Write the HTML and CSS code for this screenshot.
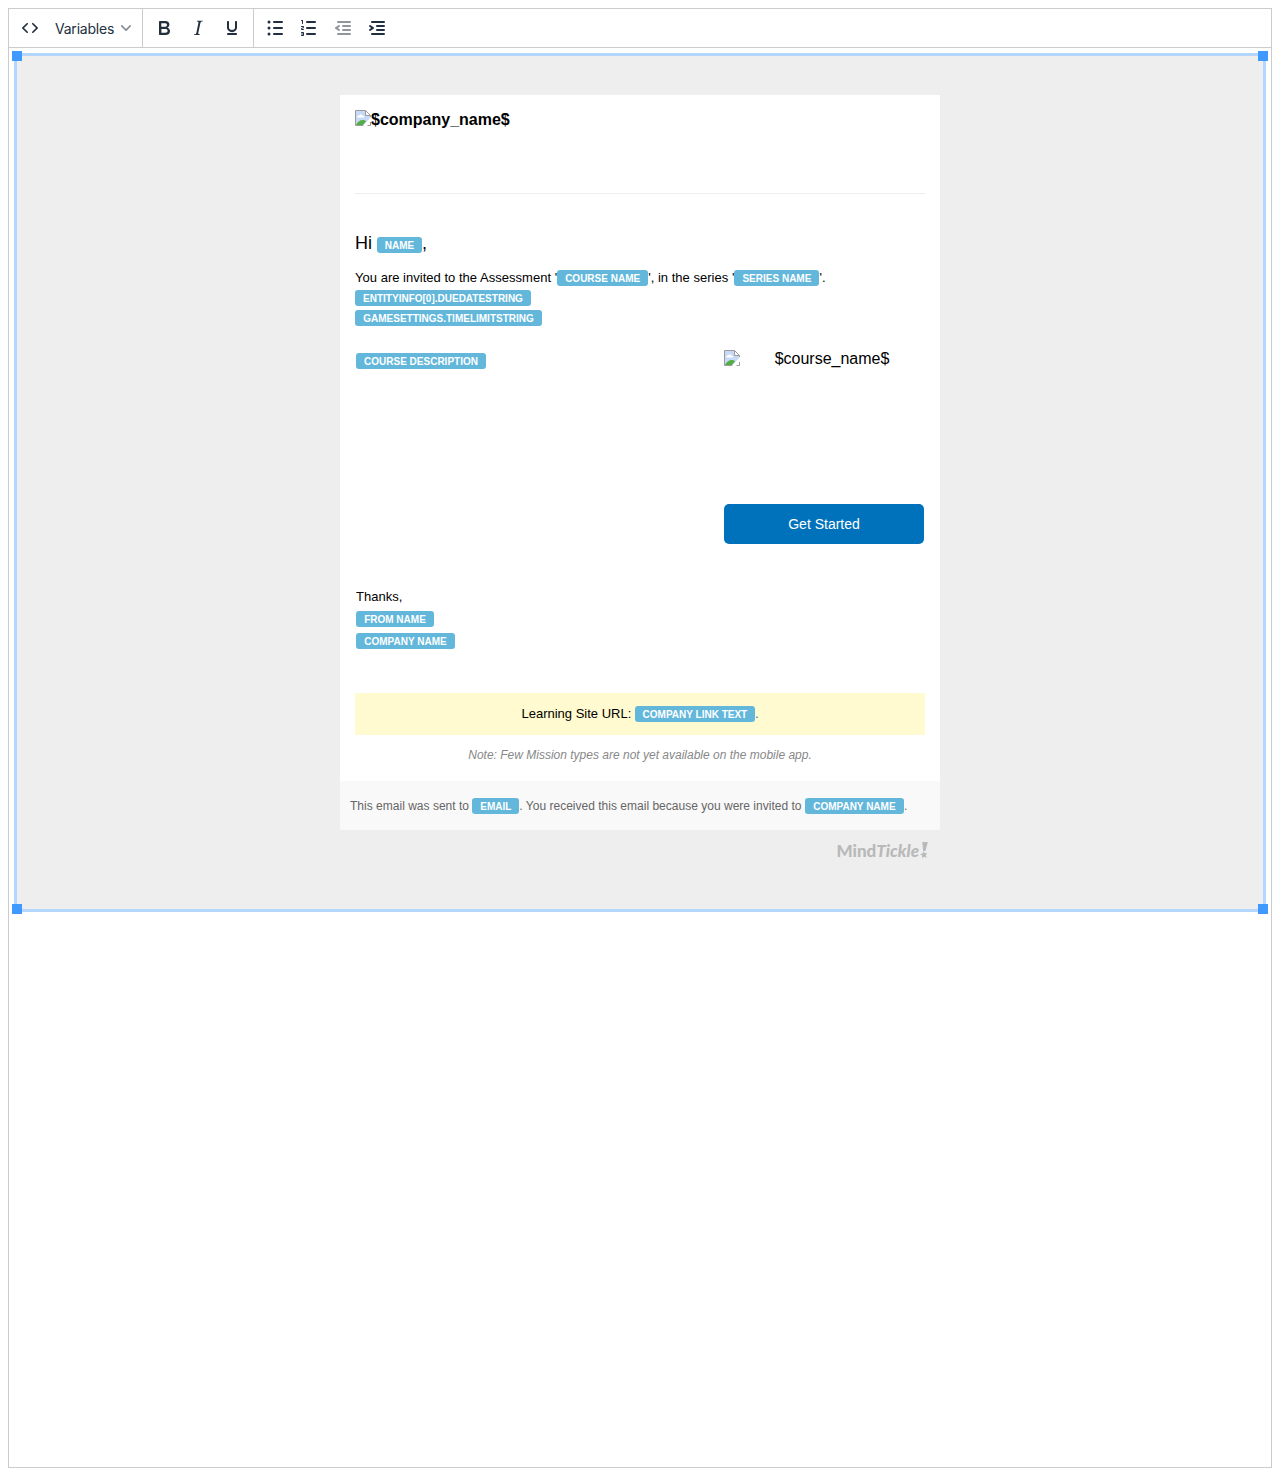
FILE: index.html
```html
<!DOCTYPE html>
<html lang="en">
<head>
<meta charset="utf-8">
<title>Email template editor</title>
<link rel="stylesheet" href="styles.css">
</head>
<body>
<svg class="defs" width="0" height="0">
  <symbol id="broken" viewBox="0 0 16 16">
    <path d="M.5.5h10l5 5v2L8 15.500H.5z" fill="#c6d9f6"/>
    <path d="M2 7.500c0-1.500 1-2 2-2 .5-1.500 3-1.500 3.500 0 1.500 0 2 1 1.500 2z" fill="#fff"/>
    <path d="M1 15c1-3 4-5 7-5 1.500 0 2.500.5 3 1.500L8 15z" fill="#57ad45"/>
    <path d="M10.500.5v5h5z" fill="#fff"/>
    <path d="M8.500 15.500H.5V.5h10l5 5V7M10.500.5v5h5M12.500 15.500h3V12" fill="none" stroke="#9b9b9b"/>
    <path d="M9 16l7-6.500" stroke="#fff" stroke-width="2"/>
  </symbol>
</svg>
<div class="editor">
  <div class="toolbar">
    <div class="group">
      <button class="tool"><svg width="24" height="24"><path d="M9.800 15.700c.3.3.3.8 0 1-.3.4-.9.4-1.200 0l-4.400-4.100a.8.8 0 010-1.200l4.400-4.200c.3-.3.9-.3 1.200 0 .3.3.3.8 0 1.100L6 12l3.800 3.700zM14.200 15.700c-.3.3-.3.8 0 1 .4.4.9.4 1.200 0l4.400-4.100c.3-.3.3-.9 0-1.200l-4.400-4.200a.8.8 0 00-1.200 0c-.3.3-.3.8 0 1.100L18 12l-3.800 3.700z"/></svg></button>
      <button class="tool select"><span>Variables</span><svg width="10" height="10"><path d="M8.700 2.200c.3-.3.8-.3 1 0 .4.4.4.9 0 1.200L5.700 7.800c-.3.3-.9.3-1.200 0L.2 3.400a.8.8 0 010-1.200c.3-.3.8-.3 1.100 0L5 6l3.700-3.800z"/></svg></button>
    </div>
    <div class="group">
      <button class="tool"><svg width="24" height="24"><path d="M7.800 19c-.3 0-.5 0-.6-.2l-.2-.5V5.700c0-.2 0-.4.2-.5l.6-.2h5c1.500 0 2.700.3 3.500 1 .7.6 1.100 1.400 1.100 2.500a3 3 0 01-.6 1.900c-.4.6-1 1-1.600 1.200.4.1.9.3 1.300.6s.8.7 1 1.200c.4.4.5 1 .5 1.600 0 1.300-.4 2.300-1.300 3-.8.7-2.100 1-3.800 1H7.800zm5-8.300c.6 0 1.200-.1 1.600-.5.4-.3.6-.7.6-1.300 0-1.100-.8-1.700-2.300-1.700H9.300v3.500h3.400zm.5 6c.7 0 1.300-.1 1.700-.4.4-.4.6-.9.6-1.500s-.2-1-.7-1.400c-.4-.3-1-.4-2-.4H9.400v3.800h4z" fill-rule="evenodd"/></svg></button>
      <button class="tool"><svg width="24" height="24"><path d="M16.700 4.700l-.1.9h-.3c-.6 0-1 0-1.400.3-.3.3-.4.6-.5 1.100l-2.100 9.800v.6c0 .5.4.8 1.400.8h.2l-.2.8H8l.2-.8h.2c1.100 0 1.800-.5 2-1.500l2-9.800.1-.5c0-.6-.4-.8-1.400-.8h-.3l.2-.9h5.800z"/></svg></button>
      <button class="tool"><svg width="24" height="24"><path d="M16 5c.6 0 1 .4 1 1v5.500a4 4 0 01-.4 1.800l-1 1.400a5.300 5.300 0 01-5.500 1 5 5 0 01-1.600-1c-.5-.4-.8-.9-1.100-1.400a4 4 0 01-.4-1.800V6c0-.6.4-1 1-1s1 .4 1 1v5.500c0 .3 0 .6.2 1l.6.7a3.300 3.300 0 002.200.8 3.400 3.400 0 002.200-.8c.3-.2.4-.5.6-.8l.2-.9V6c0-.6.4-1 1-1zM8 17h8c.6 0 1 .4 1 1s-.4 1-1 1H8a1 1 0 010-2z"/></svg></button>
    </div>
    <div class="group last">
      <button class="tool"><svg width="24" height="24"><path d="M11 5h8a1 1 0 010 2h-8a1 1 0 010-2zm0 6h8a1 1 0 010 2h-8a1 1 0 010-2zm0 6h8a1 1 0 010 2h-8a1 1 0 010-2z"/><circle cx="6" cy="6" r="1.500"/><circle cx="6" cy="12" r="1.500"/><circle cx="6" cy="18" r="1.500"/></svg></button>
      <button class="tool"><svg width="24" height="24"><path d="M10 17h8a1 1 0 010 2h-8a1 1 0 010-2zm0-6h8a1 1 0 010 2h-8a1 1 0 010-2zm0-6h8a1 1 0 010 2h-8a1 1 0 110-2zM6 4v3.500c0 .3-.2.5-.5.5a.5.5 0 01-.5-.5V5h-.5a.5.5 0 010-1H6zm-1 8.800l.2.2h1.300c.3 0 .5.2.5.5s-.2.5-.5.5H4.900a1 1 0 01-.9-1V13c0-.4.3-.8.6-1l1.200-.4.2-.3a.2.2 0 00-.2-.2H4.500a.5.5 0 01-.5-.5c0-.3.2-.5.5-.5h1.600c.5 0 .9.4.9 1v.1c0 .4-.3.8-.6 1l-1.200.4-.2.3zM7 17v2c0 .6-.4 1-1 1H4.500a.5.5 0 010-1h1.200c.2 0 .3-.1.3-.3 0-.2-.1-.3-.3-.3H4.400a.4.4 0 110-.8h1.300c.2 0 .3-.1.3-.3 0-.2-.1-.3-.3-.3H4.500a.5.5 0 110-1H6c.6 0 1 .4 1 1z"/></svg></button>
      <button class="tool disabled"><svg width="24" height="24"><path d="M7 5h12a1 1 0 010 2H7a1 1 0 110-2zm5 4h7a1 1 0 010 2h-7a1 1 0 010-2zm0 4h7a1 1 0 010 2h-7a1 1 0 010-2zm-5 4h12a1 1 0 010 2H7a1 1 0 010-2zm1.600-3.800a1 1 0 01-1.200 1.600l-3-2a1 1 0 010-1.600l3-2a1 1 0 011.200 1.600L6.800 12l1.800 1.200z"/></svg></button>
      <button class="tool"><svg width="24" height="24"><path d="M7 5h12a1 1 0 010 2H7a1 1 0 110-2zm5 4h7a1 1 0 010 2h-7a1 1 0 010-2zm0 4h7a1 1 0 010 2h-7a1 1 0 010-2zm-5 4h12a1 1 0 010 2H7a1 1 0 010-2zm-2.600-3.800L6.200 12l-1.800-1.200a1 1 0 011.200-1.600l3 2a1 1 0 010 1.600l-3 2a1 1 0 11-1.200-1.600z"/></svg></button>
    </div>
  </div>
  <div class="canvas">
    <i class="handle nw"></i><i class="handle ne"></i><i class="handle sw"></i><i class="handle se"></i>
    <div class="mail">
      <div class="content">
        <div class="brand"><svg width="16" height="16"><use href="#broken"/></svg><b>$company_name$</b></div>
        <p class="greeting">Hi <span class="tag w45">NAME</span>,</p>
        <div class="intro">
          <p>You are invited to the Assessment '<span class="tag w91">COURSE NAME</span>', in the series '<span class="tag w85">SERIES NAME</span>'.</p>
          <p><span class="tag w176">ENTITYINFO[0].DUEDATESTRING</span></p>
          <p><span class="tag w187">GAMESETTINGS.TIMELIMITSTRING</span></p>
        </div>
        <div class="course">
          <p class="about"><span class="tag w130">COURSE DESCRIPTION</span></p>
          <div class="side">
            <div class="thumb"><svg width="16" height="16"><use href="#broken"/></svg><span>$course_name$</span></div>
            <a class="start">Get Started</a>
          </div>
        </div>
        <div class="thanks">
          <p>Thanks,</p>
          <p><span class="tag w78">FROM NAME</span></p>
          <p><span class="tag w99">COMPANY NAME</span></p>
        </div>
        <p class="site">Learning Site URL: <span class="tag w120">COMPANY LINK TEXT</span><span class="dot">.</span></p>
        <p class="note">Note: Few Mission types are not yet available on the mobile app.</p>
      </div>
      <p class="footer">This email was sent to <span class="tag w47">EMAIL</span>. You received this email because you were invited to <span class="tag w99">COMPANY NAME</span>.</p>
    </div>
    <div class="logo"><span>Mind</span><em>Tickle</em><svg width="10" height="18" viewBox="0 0 10 18"><path d="M3.300 1h5.500L6.500 10H4.200zM4.400 10.200l1.300 2.100 2.600-.2-1.600 2 1 2.600-2.500-1-2.100 1.600.2-2.700L1 13.200l2.600-.6z"/></svg></div>
  </div>
</div>
</body>
</html>
```

FILE: styles.css
```css
* { box-sizing: border-box; }
body { margin: 8px; background: #fff; color: #000; font: 13px/20px "Liberation Sans", Arial, sans-serif; }
p { margin: 0; white-space: nowrap; }
.defs { display: block; height: 0; }
.editor { height: 1460px; border: 1px solid #ccc; }
.toolbar { display: flex; height: 39px; border-bottom: 1px solid #ccc; }
.group { display: flex; align-items: center; padding: 0 4px; border-right: 1px solid #ccc; }
.group.last { border-right: 0; }
.tool { display: flex; align-items: center; justify-content: center; width: 34px; height: 34px; padding: 0; border: 0; background: none; color: #222f3e; fill: #222f3e; }
.select { width: 91px; justify-content: space-between; padding: 2px 7px 0 8px; font: 14px/20px Inter, sans-serif; letter-spacing: -0.22px; }
.select svg { margin-top: -3px; opacity: .55; }
.disabled { opacity: .5; }

.canvas { position: relative; height: 859px; margin: 5px; padding: 39px 0 0; border: 3px solid #b4d7ff; background: #eee; }
.handle { position: absolute; width: 10px; height: 10px; background: #4099ff; }
.nw { left: -5px; top: -5px; }
.ne { right: -5px; top: -5px; }
.sw { left: -5px; bottom: -5px; }
.se { right: -5px; bottom: -5px; }

.mail { width: 600px; height: 735px; margin: 0 auto; background: #fff; }
.content { height: 686px; padding: 15px 15px 0; }
.brand { display: flex; height: 84px; border-bottom: 1px solid #eee; font-size: 16px; }
.greeting { padding-top: 38px; height: 74px; font-size: 18px; line-height: 22px; }
.intro { height: 72px; letter-spacing: .02px; }
.tag { display: inline-block; height: 16px; border-radius: 3px; background: #62b7db; color: #fff; font: bold 10px/18px "Liberation Sans", Arial, sans-serif; letter-spacing: 0; text-align: center; }
.w45 { width: 45px; }
.w47 { width: 47px; }
.w78 { width: 78px; }
.w85 { width: 85px; }
.w91 { width: 91px; }
.w99 { width: 99px; }
.w120 { width: 120px; }
.w130 { width: 130px; }
.w176 { width: 176px; }
.w187 { width: 187px; }
.course { display: flex; justify-content: space-between; height: 236px; padding: 10px 1px 0; }
.about { padding-top: 1px; }
.side { width: 200px; }
.thumb { display: flex; height: 154px; font-size: 16px; line-height: 18px; }
.thumb span { flex: 1; text-align: center; }
.start { display: block; height: 40px; border-radius: 5px; background: #0072bc; color: #fff; font-size: 14px; line-height: 40px; text-align: center; }
.thanks { height: 117px; padding: 10px 1px 0; line-height: 22px; }
.site { height: 42px; background: #fffacf; line-height: 42px; text-align: center; }
.dot { color: #0072bc; }
.note { padding-top: 10px; color: #888; font-size: 12px; font-style: italic; text-align: center; }
.footer { height: 49px; padding: 0 10px; background: #f9f9f9; color: #666; font-size: 12px; line-height: 51px; letter-spacing: .013px; }
.logo { display: flex; width: 600px; height: 40px; margin: 0 auto; padding: 11px 11px 0 0; justify-content: flex-end; color: #b9b9b9; fill: #b9b9b9; font: 900 17px/19px Lato, sans-serif; }
```
